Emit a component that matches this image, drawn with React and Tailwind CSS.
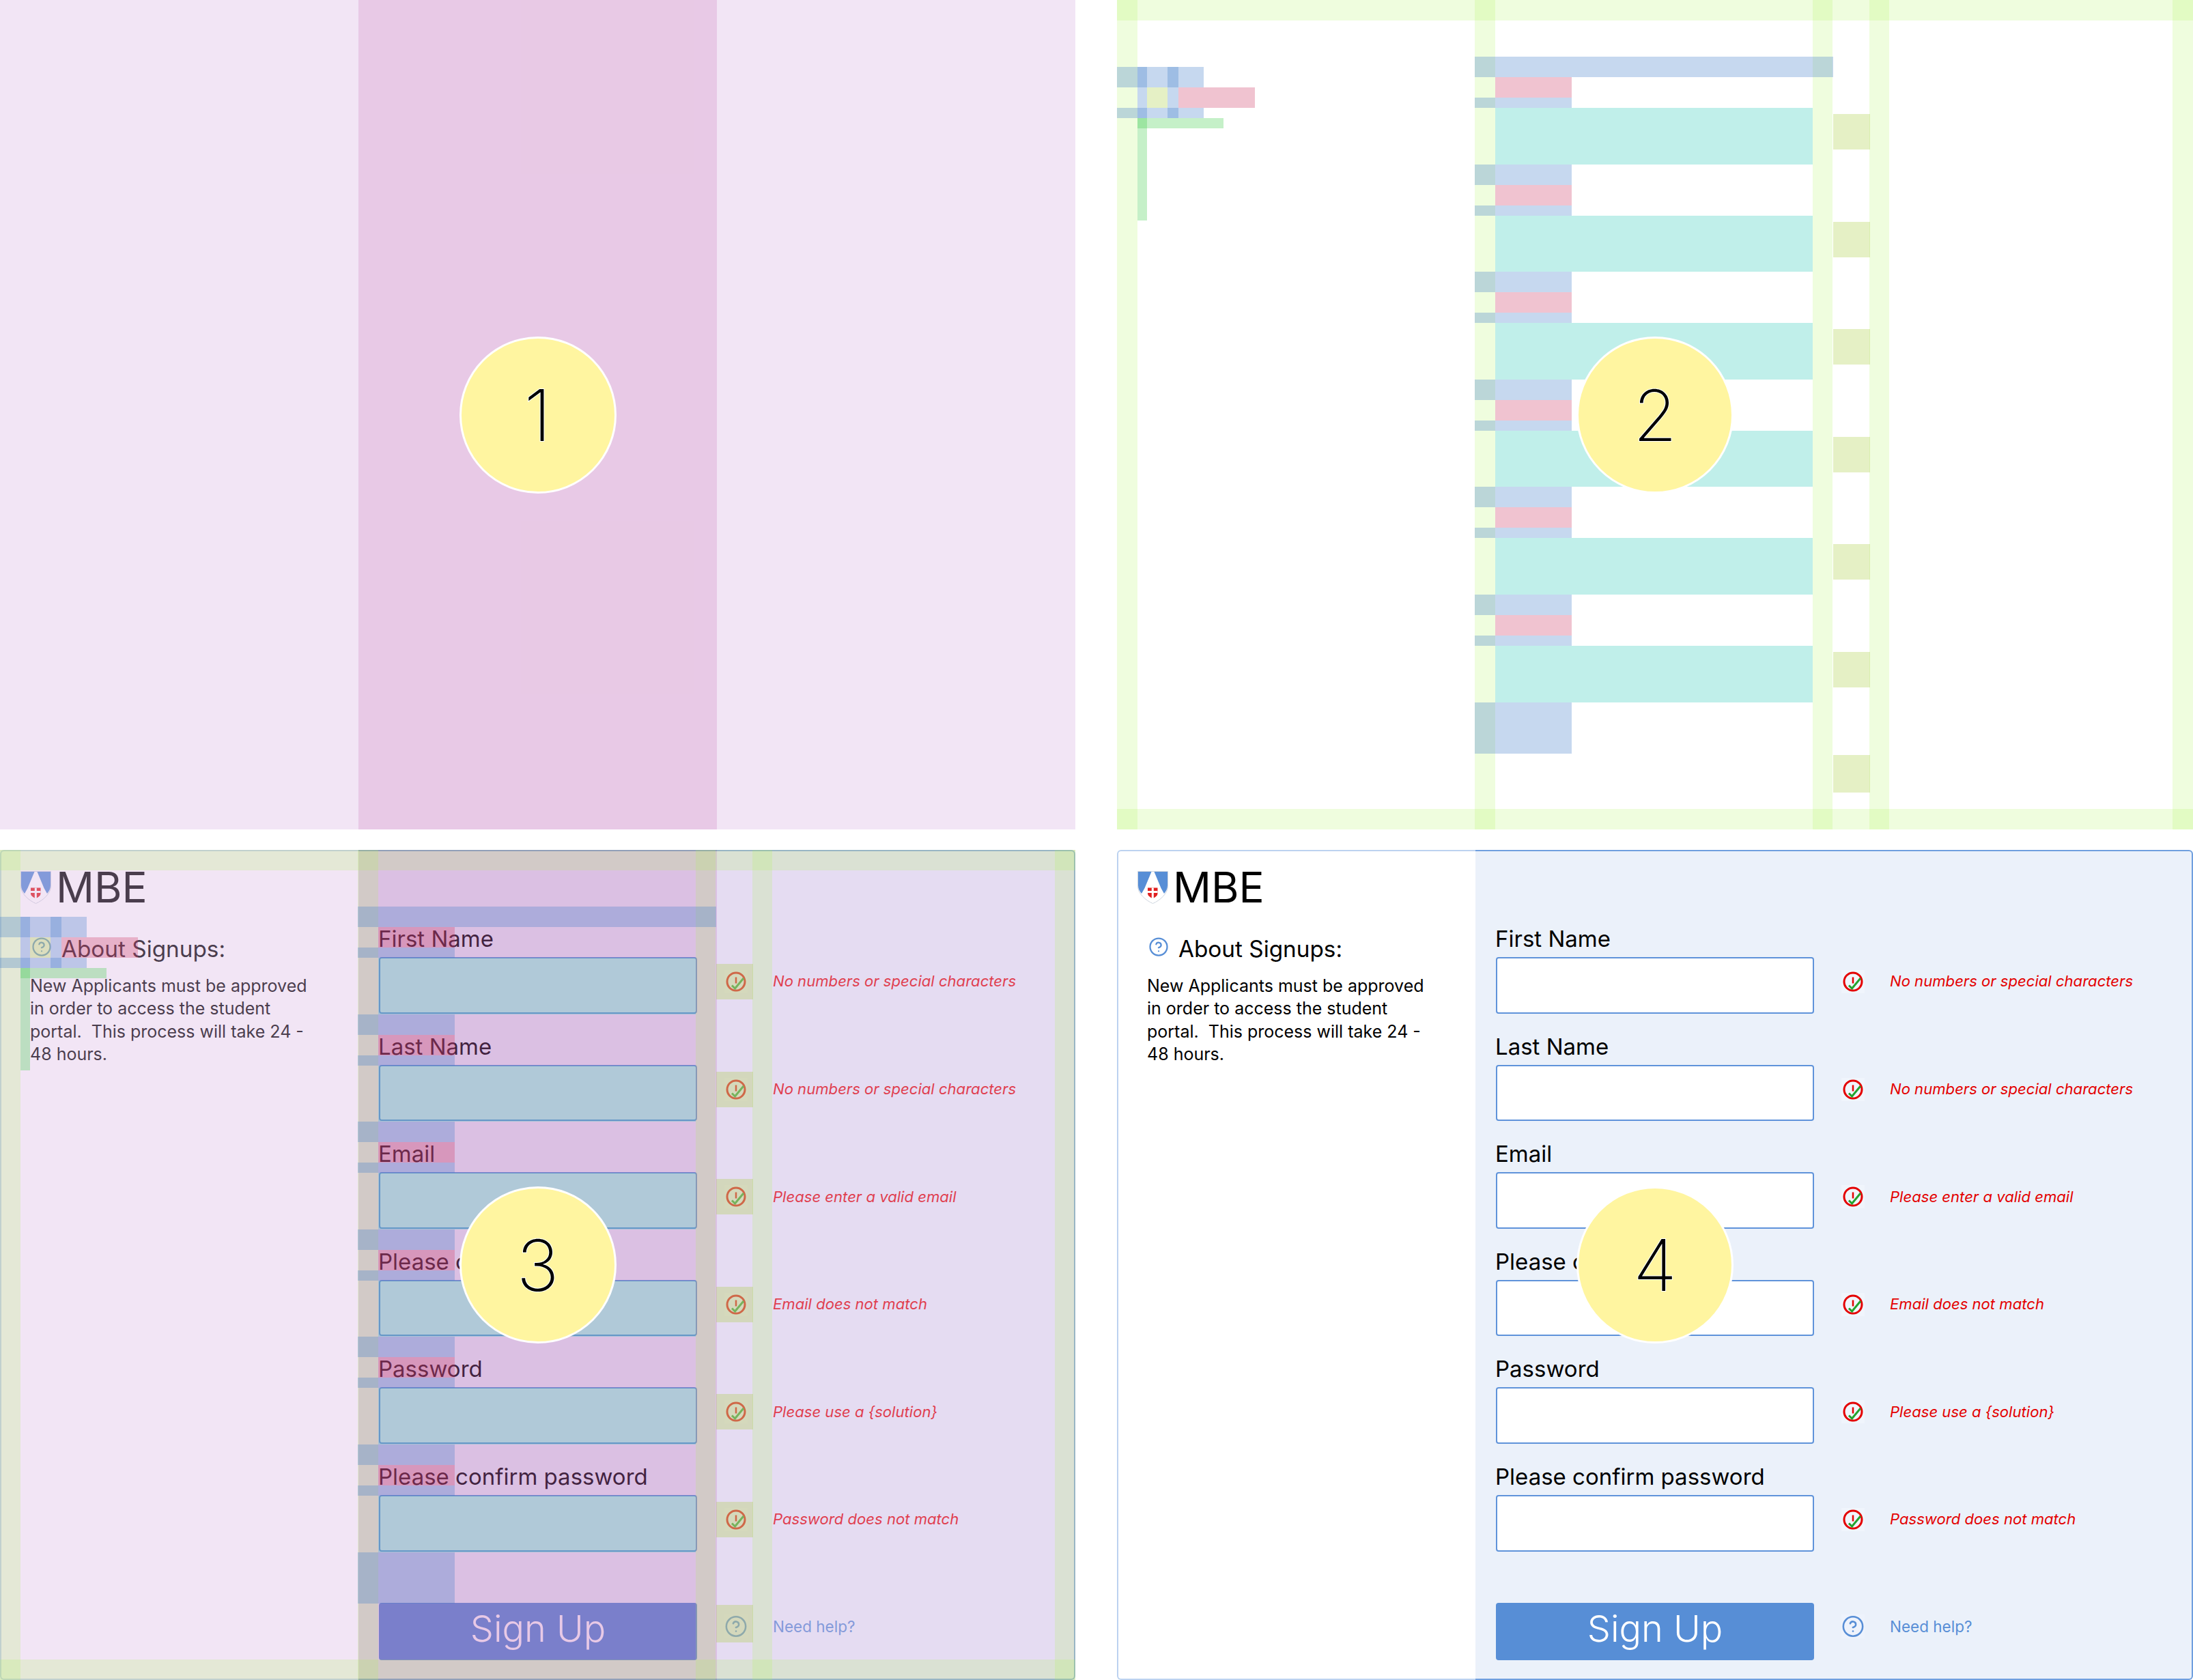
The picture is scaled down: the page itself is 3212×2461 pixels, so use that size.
import React from 'react'
import { CircleHelp } from 'lucide-react'

const rows = [
    { label: 'First Name', type: 'text', hint: 'No numbers or special characters' },
    { label: 'Last Name', type: 'text', hint: 'No numbers or special characters' },
    { label: 'Email', type: 'email', hint: 'Please enter a valid email' },
    { label: 'Please confirm email', type: 'email', hint: 'Email does not match' },
    { label: 'Password', type: 'password', hint: 'Please use a {solution}' },
    { label: 'Please confirm password', type: 'password', hint: 'Password does not match' },
]

const Shield = () => (
    <svg width="45" height="48" viewBox="0 0 45 48" className="shrink-0">
        <path d="M0.5 0.5H44.5V22C44.5 33 33 43 22.5 47.5C12 43 0.5 33 0.5 22Z" fill="#fff" stroke="#cfd6df" />
        <path d="M1 1H20.5L10.5 25L6 33C3 29 1 26 1 21Z" fill="#578ed6" />
        <path d="M44 1H24.5L34.5 25L39 33C42 29 44 26 44 21Z" fill="#578ed6" />
        <path d="M15 24.5H29.5V33C29.5 36 26 38.5 22.3 40C18.5 38.5 15 36 15 33Z" fill="#e02020" />
        <path d="M20.8 24.5H23.8V29H29.5V32H23.8V40H20.8V32H15V29H20.8Z" fill="#fff" />
    </svg>
)

const StatusIcon = () => (
    <svg width="34" height="34" viewBox="0 0 34 34" className="shrink-0 bg-[#f0f5fc]">
        <circle cx="17" cy="17" r="13" fill="none" stroke="#e40000" strokeWidth="3" />
        <path d="M17 10.5V19.5" fill="none" stroke="#e40000" strokeWidth="2.5" />
        <path d="M11 22.5L15.5 27L28 12" fill="none" stroke="#23a32d" strokeWidth="3" />
    </svg>
)

const Circle = ({ n }) => (
    <div className="col-start-1 row-start-1 place-self-center flex h-[230px] w-[230px] items-center justify-center rounded-full border-[3px] border-white bg-[#fff5a0]">
        <span className="text-[104px] font-[250] leading-none text-black [-webkit-text-stroke:2px_white] [paint-order:stroke_fill]">{n}</span>
    </div>
)

const SectionTint = () => (
    <div className="col-start-1 row-start-1 flex">
        <div className="w-[525px] bg-[#d9b3e1]/34" />
        <div className="w-[525px] bg-[#be64b6]/35" />
        <div className="flex-1 bg-[#d9b3e1]/34" />
    </div>
)

const Band = ({ className }) => <div className={'bg-[#aff55a]/20 ' + (className || '')} />

const Blocks = () => (
    <div className="col-start-1 row-start-1 grid">
        {/* vertical padding bands */}
        <div className="col-start-1 row-start-1 flex">
            <Band className="w-[30px]" />
            <div className="w-[494px]" />
            <Band className="w-[30px]" />
            <div className="w-[465px]" />
            <Band className="w-[29px]" />
            <div className="w-[54px]" />
            <Band className="w-[29px]" />
            <div className="flex-1" />
            <Band className="w-[30px]" />
        </div>

        {/* horizontal padding bands */}
        <div className="col-start-1 row-start-1 flex flex-col justify-between">
            <Band className="h-[30px]" />
            <Band className="h-[30px]" />
        </div>

        <div className="col-start-1 row-start-1 flex">
            <div className="w-[524px] pt-[98px]">
                <div className="flex h-[30px] w-[127px] bg-[#417dc9]/30">
                    <div className="ml-[30px] w-[14px] bg-[#417dc9]/30" />
                    <div className="ml-[30px] w-[16px] bg-[#417dc9]/30" />
                </div>
                <div className="ml-[30px] flex h-[30px]">
                    <div className="w-[14px] bg-[#417dc9]/30" />
                    <div className="w-[30px] bg-[#a8cd3e]/30" />
                    <div className="w-[16px] bg-[#417dc9]/30" />
                    <div className="w-[112px] bg-[#cd3762]/30" />
                </div>
                <div className="flex h-[15px] w-[127px] bg-[#417dc9]/30">
                    <div className="ml-[30px] w-[14px] bg-[#417dc9]/30" />
                    <div className="ml-[30px] w-[16px] bg-[#417dc9]/30" />
                </div>
                <div className="ml-[30px] h-[15px] w-[126px] bg-[#3ecd48]/30">
                    <div className="h-full w-[14px] bg-[#3ecd48]/30" />
                </div>
                <div className="ml-[30px] h-[135px] w-[14px] bg-[#3ecd48]/30" />
            </div>

            <div className="w-[525px] pt-[83px]">
                {rows.map((row, index) => (
                    <div key={index}>
                        <div className={'h-[30px] bg-[#417dc9]/30 ' + (index === 0 ? 'w-[525px]' : 'w-[142px]')} />
                        <div className="ml-[30px] h-[30px] w-[112px] bg-[#cd3762]/30" />
                        <div className="h-[15px] w-[142px] bg-[#417dc9]/30" />
                        <div className="ml-[30px] h-[82.6px] w-[465px] bg-[#30c9b9]/30" />
                    </div>
                ))}
                <div className="h-[75px] w-[142px] bg-[#417dc9]/30" />
            </div>

            <div className="flex flex-col gap-[105.6px] pt-[167px]">
                {rows.map((row, index) => (
                    <div key={index} className="h-[52px] w-[54px] bg-[#a8cd3e]/30" />
                ))}
                <div className="-mt-[7px] h-[55px] w-[54px] bg-[#a8cd3e]/30" />
            </div>
        </div>
    </div>
)

const Field = ({ row }) => (
    <div className="flex h-[127.6px]">
        <div className="w-[466px]">
            <div className="-ml-[1px] h-[45px] whitespace-nowrap text-[33px] leading-[36px] text-black">{row.label}</div>
            <input
                type={row.type}
                className="block h-[82.6px] w-full rounded-[4px] border-2 border-[#5f93da] bg-white"
            />
        </div>
        <div className="ml-[40px] mt-[64px] flex h-[34px] items-center">
            <StatusIcon />
            <span className="ml-[37px] whitespace-nowrap text-[22.1px] italic text-[#e40000]">{row.hint}</span>
        </div>
    </div>
)

const Signup = () => (
    <div className="col-start-1 row-start-1 flex">
        <div className="w-[525px] shrink-0 rounded-l-[6px] border-y-2 border-l-2 border-[#bcd2f0] bg-white pl-[28px] pt-[29px]">
            <div className="flex h-[48px] items-center">
                <Shield />
                <span className="ml-[7px] text-[62px] leading-[48px] text-black">MBE</span>
            </div>
            <div className="mt-[46px] flex items-start pl-[15.5px]">
                <CircleHelp size={30} strokeWidth={1.8} color="#578ed6" className="mt-[2px] shrink-0" />
                <span className="ml-[14.5px] text-[33.3px] leading-[40px] text-black">About Signups:</span>
            </div>
            <p className="mt-[18px] whitespace-pre pl-[14px] text-[25px] leading-[33.4px] text-black">
                {'New Applicants must be approved\nin order to access the student\nportal.  This process will take 24 -\n48 hours.'}
            </p>
        </div>
        <div className="flex-1 rounded-r-[6px] border-y-2 border-r-2 border-[#6f9fde] bg-[#ebf1fa] pl-[30px] pt-[110px]">
            <div className="flex flex-col gap-[30px]">
                {rows.map((row) => (
                    <Field key={row.label} row={row} />
                ))}
                <div className="flex">
                    <div className="w-[466px] pt-[45px]">
                        <button className="block h-[84px] w-full rounded-[4px] bg-[#578ed6] pb-[8px] text-[54px] font-light leading-[76px] text-white">Sign Up</button>
                    </div>
                    <div className="ml-[40px] mt-[63px] flex h-[34px] items-center">
                        <div className="flex w-[34px] shrink-0 justify-center bg-[#eef3fc]">
                            <CircleHelp size={35} strokeWidth={1.8} color="#578ed6" />
                        </div>
                        <span className="ml-[37px] whitespace-nowrap text-[22.5px] text-[#578ed6]">Need help?</span>
                    </div>
                </div>
            </div>
        </div>
    </div>
)

const App = () => {
    return (
        <div className="grid h-[2461px] w-[3212px] grid-cols-[1575px_1576px] grid-rows-[1215px_1216px] gap-x-[61px] gap-y-[30px] bg-white font-[Inter,sans-serif]">
            <div className="grid">
                <SectionTint />
                <Circle n="1" />
            </div>
            <div className="grid">
                <Blocks />
                <Circle n="2" />
            </div>
            <div className="grid">
                <Signup />
                <SectionTint />
                <Blocks />
                <Circle n="3" />
            </div>
            <div className="grid">
                <Signup />
                <Circle n="4" />
            </div>
        </div>
    )
}

export default App
